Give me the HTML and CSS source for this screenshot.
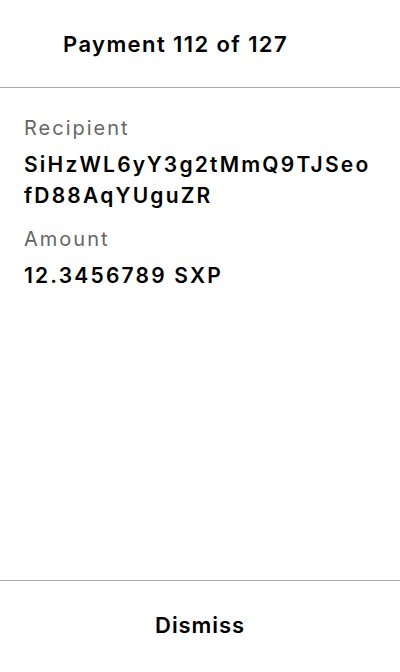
FILE: index.html
```html
<!DOCTYPE html>
<html>
<head>
<meta charset="utf-8">
<link rel="stylesheet" href="styles.css">
</head>
<body>
<div class="screen">
  <header class="header">
    <h1 class="title">Payment 112 of 127</h1>
  </header>
  <main class="content">
    <div class="field">
      <div class="label">Recipient</div>
      <div class="value break">SiHzWL6yY3g2tMmQ9TJSeofD88AqYUguZR</div>
    </div>
    <div class="field">
      <div class="label">Amount</div>
      <div class="value">12.3456789 SXP</div>
    </div>
  </main>
  <footer class="footer">
    <button class="dismiss">Dismiss</button>
  </footer>
</div>
</body>
</html>
```
FILE: styles.css
```css
html, body {
  margin: 0;
  padding: 0;
  background: #fff;
}
body {
  font-family: Inter, "Noto Sans", sans-serif;
  color: #000;
}
.screen {
  width: 400px;
  height: 672px;
  display: flex;
  flex-direction: column;
}
.header {
  height: 88px;
  flex: none;
  border-bottom: 1px solid #aaa;
  display: flex;
  align-items: center;
  padding-left: 63px;
  box-sizing: border-box;
}
.title {
  margin: 0;
  font-size: 22px;
  font-weight: 600;
  letter-spacing: 1.4px;
}
.content {
  flex: 1;
  padding: 26px 28px 0 24px;
  display: flex;
  flex-direction: column;
  gap: 14px;
}
.label {
  font-size: 20px;
  color: #666;
  line-height: 28px;
  margin-bottom: 7px;
  letter-spacing: 2px;
}
.value {
  font-size: 21px;
  font-weight: 600;
  line-height: 31px;
  letter-spacing: 2.2px;
}
.break {
  word-break: break-all;
}
.footer {
  height: 92px;
  flex: none;
  box-sizing: border-box;
  border-top: 1px solid #aaa;
  padding-bottom: 4px;
  display: flex;
  align-items: center;
  justify-content: center;
}
.dismiss {
  border: 0;
  background: none;
  font-family: inherit;
  font-size: 22px;
  font-weight: 600;
  letter-spacing: 0.9px;
  color: #000;
  padding: 0;
}
```
